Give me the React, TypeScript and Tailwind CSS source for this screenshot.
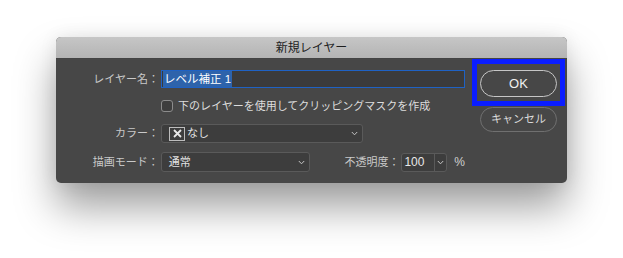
import React from "react";

const FONT = { fontFamily: '"Liberation Sans", "Noto Sans CJK JP", sans-serif' };

function Chevron({ className = "" }: { className?: string }) {
  return (
    <svg width="7" height="5" viewBox="0 0 7 5" className={className}>
      <path d="M0.8 1 L3.5 3.8 L6.2 1" fill="none" stroke="#c4c4c4" strokeWidth="1" />
    </svg>
  );
}

function Label({ children }: { children: React.ReactNode }) {
  return (
    <div className="w-[103px] mr-[2px] text-right text-[11px] leading-none text-[#c9c9c9]">
      {children}
    </div>
  );
}

export default function App() {
  return (
    <div className="w-[623px] h-[258px] bg-white pt-[37px] pl-[56px] overflow-hidden" style={FONT}>
      <div className="w-[511px] h-[146px] rounded-[5px] overflow-hidden bg-[#474747] flex flex-col shadow-[0_24px_40px_rgba(0,0,0,0.38),0_0_18px_rgba(0,0,0,0.08)]">
        {/* title bar */}
        <div className="h-[22px] shrink-0 flex items-center justify-center bg-gradient-to-b from-[#c6c6c6] to-[#b4b4b4] border-b border-[#444]">
          <span className="text-[12px] text-[#1e1e1e] leading-none">新規レイヤー</span>
        </div>

        <div className="flex flex-1">
          {/* form */}
          <div className="w-[409px] flex flex-col">
            <div className="mt-[11px] h-[18px] flex items-center">
              <Label>レイヤー名：</Label>
              <div className="w-[304px] h-[18px] border border-[#1f62c4] bg-[#3b3b3b] flex items-center pl-[1px]">
                <span className="bg-[#2d63ab] text-white text-[11.5px] leading-[16px] h-[16px] px-[1px]">
                  レベル補正 1
                </span>
              </div>
            </div>

            <div className="mt-[12px] h-[12px] flex items-center">
              <div className="ml-[105px] w-[12px] h-[12px] rounded-[3px] border border-[#8c8c8c] bg-[#3e3e3e]" />
              <span className="ml-[5px] text-[11px] leading-none text-[#dcdcdc]">
                下のレイヤーを使用してクリッピングマスクを作成
              </span>
            </div>

            <div className="mt-[12px] h-[19px] flex items-center">
              <Label>カラー：</Label>
              <div className="w-[202px] h-[19px] rounded-[3px] border border-[#5a5a5a] bg-[#3d3d3d] flex items-center pl-[7px] pr-[4px]">
                <div className="w-[16px] h-[14px] border border-[#bdbdbd] flex items-center justify-center">
                  <svg width="9" height="9" viewBox="0 0 9 9">
                    <path d="M1 1 L8 8 M8 1 L1 8" stroke="#e8e8e8" strokeWidth="1.8" />
                  </svg>
                </div>
                <span className="ml-[2px] text-[11px] leading-none text-[#e2e2e2]">なし</span>
                <Chevron className="ml-auto" />
              </div>
            </div>

            <div className="mt-[9px] h-[20px] flex items-center">
              <Label>描画モード：</Label>
              <div className="w-[149px] h-[20px] rounded-[3px] border border-[#5a5a5a] bg-[#3d3d3d] flex items-center pl-[7px] pr-[4px]">
                <span className="text-[11px] leading-none text-[#e2e2e2]">通常</span>
                <Chevron className="ml-auto" />
              </div>
              <span className="ml-[35px] w-[57px] text-[11px] leading-none text-[#c9c9c9]">不透明度：</span>
              <div className="w-[46px] h-[19px] rounded-[3px] border border-[#5a5a5a] bg-[#3d3d3d] flex">
                <div className="w-[32px] flex items-center pl-[2px] text-[12px] leading-none text-[#e8e8e8]">100</div>
                <div className="flex-1 border-l border-[#5a5a5a] flex items-center justify-center">
                  <Chevron />
                </div>
              </div>
              <span className="ml-[7px] text-[12px] leading-none text-[#cfcfcf]">%</span>
            </div>
          </div>

          {/* buttons */}
          <div className="ml-[7px] flex flex-col">
            <div className="w-[93px] h-[47px] border-[5px] border-[#0a1dff] pt-[6px] pl-[3px]">
              <div className="w-[77px] h-[27px] rounded-full border-[1.5px] border-[#c6c6c6] flex items-center justify-center text-[13px] leading-none text-[#f0f0f0]">
                OK
              </div>
            </div>
            <div className="mt-[1px] ml-[8px] w-[77px] h-[25px] rounded-full border border-[#707070] flex items-center justify-center text-[11px] leading-none text-[#dadada]">
              キャンセル
            </div>
          </div>
        </div>
      </div>
    </div>
  );
}
